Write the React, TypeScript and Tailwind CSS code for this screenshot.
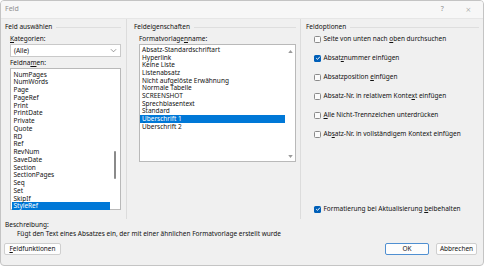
import React from 'react';

const U: React.FC<{ children: React.ReactNode }> = ({ children }) => <span className="underline underline-offset-[1px]">{children}</span>;

const feldnamen = ['NumPages', 'NumWords', 'Page', 'PageRef', 'Print', 'PrintDate', 'Private', 'Quote', 'RD', 'Ref', 'RevNum', 'SaveDate', 'Section', 'SectionPages', 'Seq', 'Set', 'SkipIf', 'StyleRef'];

const vorlagen = ['Absatz-Standardschriftart', 'Hyperlink', 'Keine Liste', 'Listenabsatz', 'Nicht aufgelöste Erwähnung', 'Normale Tabelle', 'SCREENSHOT', 'Sprechblasentext', 'Standard', 'Überschrift 1', 'Überschrift 2'];

const Check: React.FC<{ on?: boolean }> = ({ on }) =>
  on ? (
    <div className="flex h-[7px] w-[7px] shrink-0 items-center justify-center rounded-[1.5px] bg-[#005fb8]">
      <svg width="6" height="6" viewBox="0 0 10 10">
        <path d="M2 5.2 L4.2 7.3 L8.2 2.8" fill="none" stroke="white" strokeWidth="1.6" />
      </svg>
    </div>
  ) : (
    <div className="h-[7px] w-[7px] shrink-0 rounded-[1.5px] border border-[#8a8a8a] bg-[#fbfbfb]" />
  );

const Heading: React.FC<{ label: string }> = ({ label }) => (
  <div className="flex h-[8px] items-center gap-[4px] leading-[8px]">
    <span className="shrink-0">{label}</span>
    <div className="h-px flex-1 bg-[#dedede]" />
  </div>
);

const Option: React.FC<{ on?: boolean; children: React.ReactNode; className?: string }> = ({ on, children, className }) => (
  <div className={`flex h-[8px] items-center gap-[2px] pl-[8px] leading-[8px] ${className ?? ''}`}>
    <Check on={on} />
    <span className="ml-[0.5px]">{children}</span>
  </div>
);

const Button: React.FC<{ children: React.ReactNode; className?: string }> = ({ children, className }) => (
  <div className={`flex h-[12px] items-center justify-center rounded-[2px] border bg-[#fdfdfd] leading-[10px] ${className ?? ''}`}>{children}</div>
);

const App: React.FC = () => {
  return (
    <div className="flex h-[266px] w-[484px] flex-col overflow-hidden rounded-[4px] border border-[#c4c4c4] bg-[#f0f0f0] font-['Noto_Sans',sans-serif] text-[6.5px] text-[#111]">
      <div className="flex h-[18px] shrink-0 items-center border-b border-[#e6e6e6] bg-[#f7f7f7] pl-[4px] pr-[12px] text-[#8f8f8f]">
        <span className="text-[7px]">Feld</span>
        <span className="ml-auto text-[7px]">?</span>
        <span className="ml-[22px] text-[9px] font-light">×</span>
      </div>

      <div className="flex h-[200px] shrink-0">
        <div className="w-[126px] shrink-0 border-r border-[#dcdcdc] pl-[4px] pr-[5px] pt-[4px]">
          <Heading label="Feld auswählen" />
          <div className="ml-[5px] mt-[4px] h-[8px] leading-[8px]"><U>K</U>ategorien:</div>
          <div className="ml-[5px] mt-[1px] flex h-[13px] items-center border border-[#c9c9c9] bg-white pl-[3px] pr-[3px]">
            <span>(Alle)</span>
            <svg className="ml-auto" width="7" height="5" viewBox="0 0 8 5">
              <path d="M1 1 L4 4 L7 1" fill="none" stroke="#6f6f6f" strokeWidth="0.8" />
            </svg>
          </div>
          <div className="ml-[5px] mt-[2px] h-[8px] leading-[8px]">Feldna<U>m</U>en:</div>
          <div className="ml-[5px] mt-[1px] flex h-[142px] border border-[#b9b9b9] bg-white pt-[1.5px]">
            <div className="flex-1 pl-[0.5px]">
              {feldnamen.map((n) => (
                <div key={n} className={`h-[7.75px] pl-[2px] leading-[7.75px] ${n === 'StyleRef' ? 'bg-[#0078d7] text-white' : ''}`}>
                  {n}
                </div>
              ))}
            </div>
            <div className="flex w-[10px] shrink-0 justify-center pt-[80px]">
              <div className="h-[28px] w-[1.5px] rounded-full bg-[#8a8a8a]" />
            </div>
          </div>
        </div>

        <div className="w-[174px] shrink-0 border-r border-[#dcdcdc] pl-[7px] pr-[4px] pt-[4px]">
          <Heading label="Feldeigenschaften" />
          <div className="ml-[5px] mt-[4px] h-[8px] leading-[8px]">Formatvorlage<U>n</U>name:</div>
          <div className="ml-[5px] mt-[1px] flex h-[118px] border border-[#b9b9b9] bg-white pt-[1px]">
            <div className="flex-1">
              {vorlagen.map((n) => (
                <div key={n} className={`h-[7.67px] pl-[2px] leading-[7.67px] ${n === 'Überschrift 1' ? 'bg-[#0078d7] text-white' : ''}`}>
                  {n}
                </div>
              ))}
            </div>
            <div className="flex w-[10px] shrink-0 flex-col items-center justify-between pb-[3px] pt-[4px]">
              <svg width="5" height="3" viewBox="0 0 6 4"><path d="M0 4 L3 0 L6 4 Z" fill="#9a9a9a" /></svg>
              <svg width="5" height="3" viewBox="0 0 6 4"><path d="M0 0 L3 4 L6 0 Z" fill="#9a9a9a" /></svg>
            </div>
          </div>
        </div>

        <div className="flex flex-1 flex-col pl-[5px] pr-[4px] pt-[4px]">
          <Heading label="Feldoptionen" />
          <Option className="mt-[4px]">Seite von unten nach <U>o</U>ben durchsuchen</Option>
          <Option on className="mt-[11px]">Absat<U>z</U>nummer einfügen</Option>
          <Option className="mt-[11px]">Absatzposition <U>e</U>infügen</Option>
          <Option className="mt-[11px]">Absatz-Nr. in relativem Konte<U>x</U>t einfügen</Option>
          <Option className="mt-[11px]"><U>A</U>lle Nicht-Trennzeichen unterdrücken</Option>
          <Option className="mt-[11px]">Ab<U>s</U>atz-Nr. in vollständigem Kontext einfügen</Option>
          <Option on className="mt-auto mb-[6px]">Formatierung bei Aktualisierung <U>b</U>eibehalten</Option>
        </div>
      </div>

      <div className="ml-[4px] mt-[2px] h-[8px] leading-[8px]">Beschreibung:</div>
      <div className="ml-[16px] mt-[1px] h-[8px] leading-[8px]">Fügt den Text eines Absatzes ein, der mit einer ähnlichen Formatvorlage erstellt wurde</div>

      <div className="mt-[5px] flex px-[3px]">
        <Button className="w-[57px] border-[#cfcfcf]"><U>F</U>eldfunktionen</Button>
        <Button className="ml-auto w-[44px] border-[#4f8fd1]">OK</Button>
        <Button className="ml-[7px] mr-[3px] w-[41px] border-[#cfcfcf]">Abbrechen</Button>
      </div>
    </div>
  );
};

export default App;
